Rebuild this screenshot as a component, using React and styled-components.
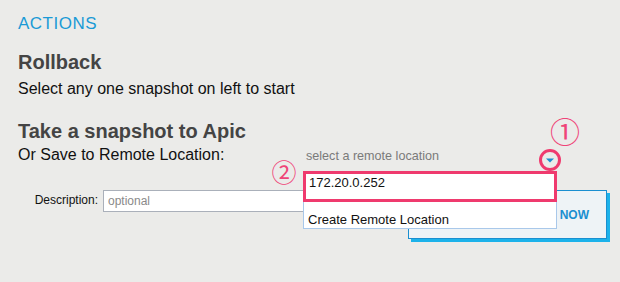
import React from "react";
import styled, { createGlobalStyle } from "styled-components";

const GlobalStyle = createGlobalStyle`
  html, body {
    margin: 0;
    padding: 0;
    background: #ebebe9;
  }

  body {
    font-family: "Liberation Sans", Arial, sans-serif;
    color: #111;
  }
`;

const Panel = styled.section`
  width: 620px;
  height: 282px;
  box-sizing: border-box;
  padding: 14px 18px 0;
  background: #ebebe9;
  overflow: hidden;
`;

const PanelTitle = styled.h2`
  margin: 0;
  font-size: 17px;
  line-height: 20px;
  font-weight: normal;
  letter-spacing: 0.5px;
  color: #1a9ad6;
`;

const SectionTitle = styled.h3`
  margin: ${(p) => p.$top}px 0 0;
  font-size: 20px;
  line-height: 24px;
  font-weight: bold;
  color: #444;
`;

const Hint = styled.p`
  margin: ${(p) => p.$top}px 0 0;
  font-size: 16px;
  line-height: 20px;
`;

const RemoteRow = styled.div`
  display: flex;
  align-items: baseline;
  margin-top: 1.5px;
`;

const RemoteLabel = styled.span`
  flex: 0 0 285px;
  font-size: 16px;
  line-height: 20px;
`;

const SelectBox = styled.div`
  position: relative;
  width: 254px;
  font-size: 12.6px;
  line-height: 20px;
  color: #7a7a7a;
  padding-left: 3px;
  box-sizing: border-box;
`;

const ArrowMark = styled.svg`
  position: absolute;
  left: 235px;
  top: 2.5px;
`;

const Callout = styled.span`
  position: absolute;
  left: ${(p) => p.$x - 18}px;
  top: ${(p) => p.$y - 18}px;
  width: 36px;
  height: 36px;
  line-height: 36px;
  text-align: center;
  font-family: "Noto Sans CJK JP", "DejaVu Sans", sans-serif;
  font-size: ${(p) => p.$size}px;
  color: #ef4478;
`;

const Menu = styled.ul`
  position: absolute;
  left: 0;
  top: 25px;
  width: 254px;
  margin: 0;
  padding: 0;
  list-style: none;
  background: #fff;
  z-index: 2;
  color: #111;
  font-size: 13px;
  line-height: 15px;
`;

const MenuItem = styled.li`
  box-sizing: border-box;
  padding: ${(p) => (p.$active ? "1.5px 3px 0" : "10.5px 4px 0")};
  height: ${(p) => (p.$active ? "31px" : "27.5px")};
  border: ${(p) => (p.$active ? "3px solid #ef3a6e" : "1px solid #a9c8ea")};
  border-top: ${(p) => (p.$active ? "3px solid #ef3a6e" : "none")};
  background: #fff;
`;

const DescRow = styled.div`
  display: flex;
  align-items: flex-start;
  margin-top: 24.5px;
`;

const DescLabel = styled.label`
  flex: 0 0 80px;
  text-align: right;
  font-size: 12px;
  line-height: 20px;
  margin-right: 5px;
`;

const DescInput = styled.input`
  flex: 0 0 295px;
  width: 295px;
  height: 22px;
  box-sizing: border-box;
  margin: 0;
  padding: 0 4px;
  border: 1px solid #aab0ba;
  background: #fff;
  font-family: "Liberation Sans", Arial, sans-serif;
  font-size: 12px;
  outline: none;

  &::placeholder {
    color: #8a8a8a;
  }
`;

const SnapButton = styled.button`
  flex: 0 0 199px;
  margin-left: 10px;
  width: 199px;
  height: 49px;
  box-sizing: border-box;
  display: flex;
  align-items: center;
  justify-content: flex-end;
  padding: 0 17px 0 0;
  border: 1px solid #1a8fd0;
  background: #eef3f6;
  box-shadow: 3px 3px 0 #1cb2ea;
  color: #1a8fd0;
  font-family: "Liberation Sans", Arial, sans-serif;
  font-size: 12px;
  font-weight: bold;
`;

export default function App() {
  return (
    <>
      <GlobalStyle />
      <Panel>
        <PanelTitle>ACTIONS</PanelTitle>

        <SectionTitle $top={16}>Rollback</SectionTitle>
        <Hint $top={4.5}>Select any one snapshot on left to start</Hint>

        <SectionTitle $top={20.5}>Take a snapshot to Apic</SectionTitle>
        <RemoteRow>
          <RemoteLabel>Or Save to Remote Location:</RemoteLabel>
          <SelectBox>
            select a remote location
            <ArrowMark width="24" height="24" viewBox="0 0 24 24">
              <circle cx="12" cy="12" r="9.5" fill="none" stroke="#ef3a6e" strokeWidth="3" />
              <polygon points="8,10.5 16,10.5 12,14.5" fill="#1a8fd0" />
            </ArrowMark>
            <Callout $x={262} $y={-15.5} $size={30}>①</Callout>
            <Callout $x={-19} $y={25.5} $size={25}>②</Callout>
            <Menu>
              <MenuItem $active>172.20.0.252</MenuItem>
              <MenuItem>Create Remote Location</MenuItem>
            </Menu>
          </SelectBox>
        </RemoteRow>

        <DescRow>
          <DescLabel>Description:</DescLabel>
          <DescInput placeholder="optional" />
          <SnapButton>TAKE SNAPSHOT NOW</SnapButton>
        </DescRow>
      </Panel>
    </>
  );
}
